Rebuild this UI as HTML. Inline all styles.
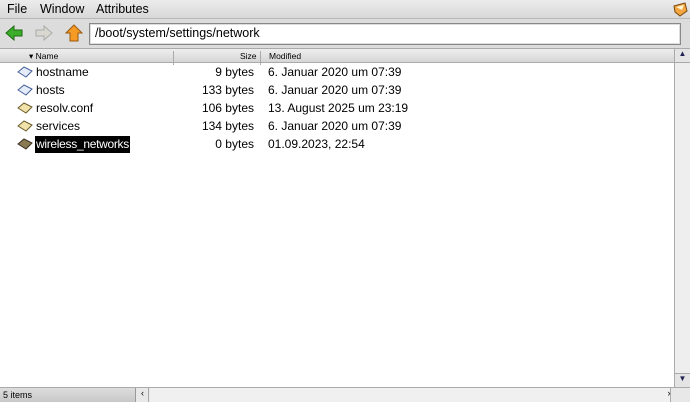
<!DOCTYPE html><html><head><style>
*{margin:0;padding:0;box-sizing:border-box}
body{width:690px;height:402px;overflow:hidden;background:#fff;font-family:"Liberation Sans","DejaVu Sans",sans-serif;position:relative;font-size:12px;color:#000}
.abs{position:absolute}
#menu{left:0;top:0;width:690px;height:19px;background:linear-gradient(#ececec,#d8d8d8);border-bottom:1px solid #b8b8b8}
#menu span{position:absolute;top:2px;font-size:12.5px}
#tool{left:0;top:19px;width:690px;height:30px;background:#dcdcdc;border-bottom:1px solid #aaa}
#path{left:89px;top:23px;width:592px;height:22px;background:#fff;border:1px solid #888;box-shadow:inset 0 0 0 1px #ddd;font-size:12.5px;padding:2px 5px}
#hdr{left:0;top:49px;width:674px;height:14px;background:linear-gradient(#eee,#d6d6d6);border-bottom:1px solid #aaa;font-size:8.5px}
#hdr div{position:absolute;top:2px}
.sep{position:absolute;top:0;width:1px;height:14px;background:#aaa}
.row{position:absolute;left:0;height:18px;width:674px;font-size:12px}
.row .n{position:absolute;left:36px;top:2px}
.row .s{position:absolute;right:420px;top:2px}
.row .m{position:absolute;left:268px;top:2px}
.row svg{position:absolute;left:17px;top:3px}
#vs{left:674px;top:49px;width:16px;height:338px;background:#eee;border-left:1px solid #aaa}
#bot{left:0;top:387px;width:690px;height:15px;background:#e8e8e8;border-top:1px solid #aaa}
</style></head><body>
<div id="menu" class="abs"><span style="left:7px">File</span><span style="left:40px">Window</span><span style="left:96px">Attributes</span>
<svg class="abs" style="left:672px;top:2px" width="16" height="15"><path d="M2 4 L13 1 L15 9 L8 14 L3 10Z" fill="#f2a540" stroke="#7a4a10"/><path d="M4 5 L12 3 L10 8Z" fill="#fff6d8"/></svg></div>
<div id="tool" class="abs">
<svg class="abs" style="left:5px;top:6px" width="18" height="16"><path d="M1 8 L9 1 V5 H17 V11 H9 V15Z" fill="#3aae2a" stroke="#1d6a12"/></svg>
<svg class="abs" style="left:35px;top:6px" width="18" height="16"><path d="M17 8 L9 1 V5 H1 V11 H9 V15Z" fill="#d8d8d0" stroke="#aaa"/></svg>
<svg class="abs" style="left:65px;top:5px" width="18" height="18"><path d="M9 1 L17 9 H13 V17 H5 V9 H1Z" fill="#f59a24" stroke="#9a5a10"/></svg>
</div>
<div id="path" class="abs">/boot/system/settings/network</div>
<div id="hdr" class="abs"><div style="left:29px">▾ Name</div><div class="sep" style="left:173px"></div><div style="left:240px">Size</div><div class="sep" style="left:260px"></div><div style="left:269px">Modified</div></div>
<div class="row" style="top:63px"><svg width="16" height="12"><path d="M1 6 L7 1 L15 5 L9 11Z" fill="#e4ecfa" stroke="#45609a"/></svg><span class="n">hostname</span><span class="s">9 bytes</span><span class="m">6. Januar 2020 um 07:39</span></div>
<div class="row" style="top:81px"><svg width="16" height="12"><path d="M1 6 L7 1 L15 5 L9 11Z" fill="#e4ecfa" stroke="#45609a"/></svg><span class="n">hosts</span><span class="s">133 bytes</span><span class="m">6. Januar 2020 um 07:39</span></div>
<div class="row" style="top:99px"><svg width="16" height="12"><path d="M1 6 L7 1 L15 5 L9 11Z" fill="#f0e2a8" stroke="#6a5a2a"/></svg><span class="n">resolv.conf</span><span class="s">106 bytes</span><span class="m">13. August 2025 um 23:19</span></div>
<div class="row" style="top:117px"><svg width="16" height="12"><path d="M1 6 L7 1 L15 5 L9 11Z" fill="#f0e2a8" stroke="#6a5a2a"/></svg><span class="n">services</span><span class="s">134 bytes</span><span class="m">6. Januar 2020 um 07:39</span></div>
<div class="row" style="top:135px"><svg width="16" height="12"><path d="M1 6 L7 1 L15 5 L9 11Z" fill="#8a7a50" stroke="#3a3020"/></svg><span class="n" style="background:#000;color:#fff;left:35px;top:1px;padding:1px 1px 2px;letter-spacing:-0.3px">wireless_networks</span><span class="s">0 bytes</span><span class="m">01.09.2023, 22:54</span></div>
<div id="vs" class="abs"><div style="position:absolute;top:0;left:0;width:15px;height:14px;background:#e4e4e4;border-bottom:1px solid #aaa;font-size:8px;text-align:center;color:#225">▲</div><div style="position:absolute;bottom:0;left:0;width:15px;height:14px;background:#e4e4e4;border-top:1px solid #aaa;font-size:8px;text-align:center;color:#225">▼</div></div>
<div id="bot" class="abs"><div style="position:absolute;left:0;top:0;width:136px;height:14px;background:linear-gradient(#ddd,#c8c8c8);border-right:1px solid #999;font-size:9px;padding:2px 3px">5 items</div>
<div style="position:absolute;left:137px;top:0;width:12px;height:14px;border-right:1px solid #aaa;font-size:9px;text-align:center">‹</div>
<div style="position:absolute;left:150px;top:0;width:521px;height:14px;background:#f0f0f0;border-right:1px solid #aaa"></div>
<div style="position:absolute;left:664px;top:0;width:10px;height:14px;font-size:9px;text-align:center">›</div></div>
</body></html>
